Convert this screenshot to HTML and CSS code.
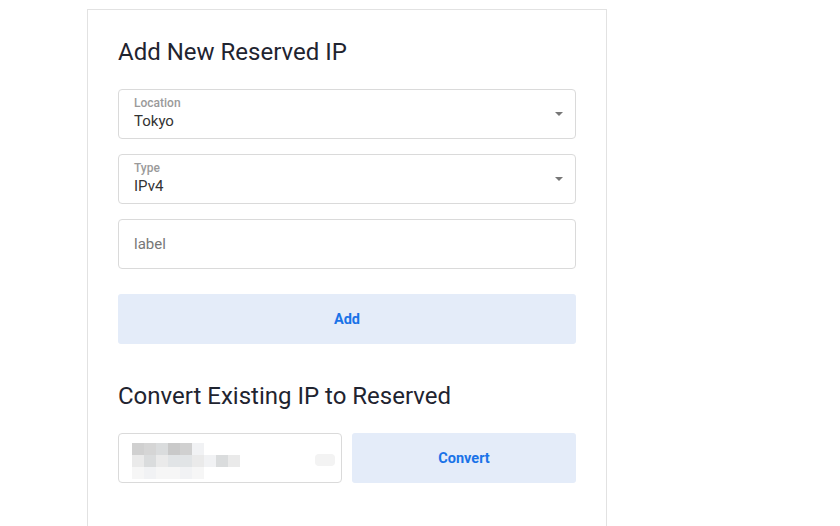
FILE: index.html
```html
<!DOCTYPE html>
<html lang="en">

<head>
    <meta charset="UTF-8">
    <meta name="viewport" content="width=device-width, initial-scale=1.0">
    <title>Reserved IPs</title>
    <link rel="stylesheet" href="styles.css">
</head>

<body>
    <div class="card">
        <h2>Add New Reserved IP</h2>

        <div class="field select">
            <span class="field-label">Location</span>
            <span class="field-value">Tokyo</span>
            <span class="caret"></span>
        </div>

        <div class="field select">
            <span class="field-label">Type</span>
            <span class="field-value">IPv4</span>
            <span class="caret"></span>
        </div>

        <div class="field text">
            <span class="placeholder">label</span>
        </div>

        <button class="btn btn-wide">Add</button>

        <h2 class="second">Convert Existing IP to Reserved</h2>

        <div class="convert-row">
            <div class="field ip-input">
                <!-- redacted ip address -->
                <div class="mosaic">
                    <div class="mrow">
                        <span class="px s2"></span><span class="px s3"></span><span class="px s4"></span><span class="px s1"></span><span class="px s2"></span><span class="px s7"></span>
                    </div>
                    <div class="mrow">
                        <span class="px s6"></span><span class="px s4"></span><span class="px s6"></span><span class="px s5"></span><span class="px s5"></span><span class="px s6"></span><span class="px s7"></span><span class="px s4"></span><span class="px s6"></span>
                    </div>
                    <div class="mrow">
                        <span class="px s8"></span><span class="px s7"></span><span class="px s8"></span><span class="px s8"></span><span class="px s7"></span><span class="px s8"></span>
                    </div>
                </div>
                <span class="px-tail"></span>
            </div>
            <button class="btn">Convert</button>
        </div>
    </div>
</body>

</html>
```

FILE: styles.css
```css
body {
    margin: 0;
    background: #ffffff;
    font-family: Roboto, "Liberation Sans", Arial, sans-serif;
    color: #212529;
}

.card {
    width: 458px;
    height: 488px;
    margin: 9px 0 0 87px;
    padding: 28px 30px 0 30px;
    border: 1px solid #e2e2e2;
    border-bottom: none;
    box-sizing: content-box;
}

h2 {
    margin: 0 0 23px 0;
    font-size: 24px;
    font-weight: 400;
    line-height: 28px;
    color: #1f2430;
}

h2.second {
    margin: 38px 0 23px 0;
}

.field {
    position: relative;
    height: 48px;
    border: 1px solid #dadada;
    border-radius: 4px;
    margin-bottom: 15px;
    box-sizing: content-box;
}

.field-label {
    display: block;
    padding: 6px 0 0 15px;
    font-size: 12px;
    font-weight: 500;
    line-height: 14px;
    color: #9a9a9a;
}

.field-value {
    display: block;
    padding: 2px 0 0 15px;
    font-size: 15px;
    line-height: 18px;
    color: #333;
}

.caret {
    position: absolute;
    right: 12px;
    top: 22px;
    width: 0;
    height: 0;
    border-left: 4px solid transparent;
    border-right: 4px solid transparent;
    border-top: 4px solid #777;
}

.text {
    display: flex;
    align-items: center;
    margin-bottom: 25px;
}

.placeholder {
    padding-left: 15px;
    font-size: 15px;
    color: #777;
}

.btn {
    height: 50px;
    border: none;
    border-radius: 3px;
    background-color: #e4ecf9;
    color: #1a73e8;
    font-family: inherit;
    font-size: 14.5px;
    font-weight: 700;
    cursor: pointer;
}

.btn-wide {
    width: 100%;
    display: block;
}

.convert-row {
    display: flex;
    gap: 10px;
}

.convert-row .field {
    width: 222px;
    margin-bottom: 0;
}

.convert-row .btn {
    width: 224px;
}

.mosaic {
    padding: 9px 0 0 13px;
}

.mrow {
    display: flex;
    height: 12px;
}

.px {
    width: 12px;
    height: 12px;
}

.px-tail {
    position: absolute;
    left: 196px;
    top: 20px;
    width: 20px;
    height: 12px;
    background: #f3f3f3;
    border-radius: 4px;
}

.s1 { background: #c9c9c9; }
.s2 { background: #d0d0d0; }
.s3 { background: #d5d5d5; }
.s4 { background: #dadcdd; }
.s5 { background: #e1e4e6; }
.s6 { background: #eaeaea; }
.s7 { background: #f1f2f4; }
.s8 { background: #f6f6f6; }
```
